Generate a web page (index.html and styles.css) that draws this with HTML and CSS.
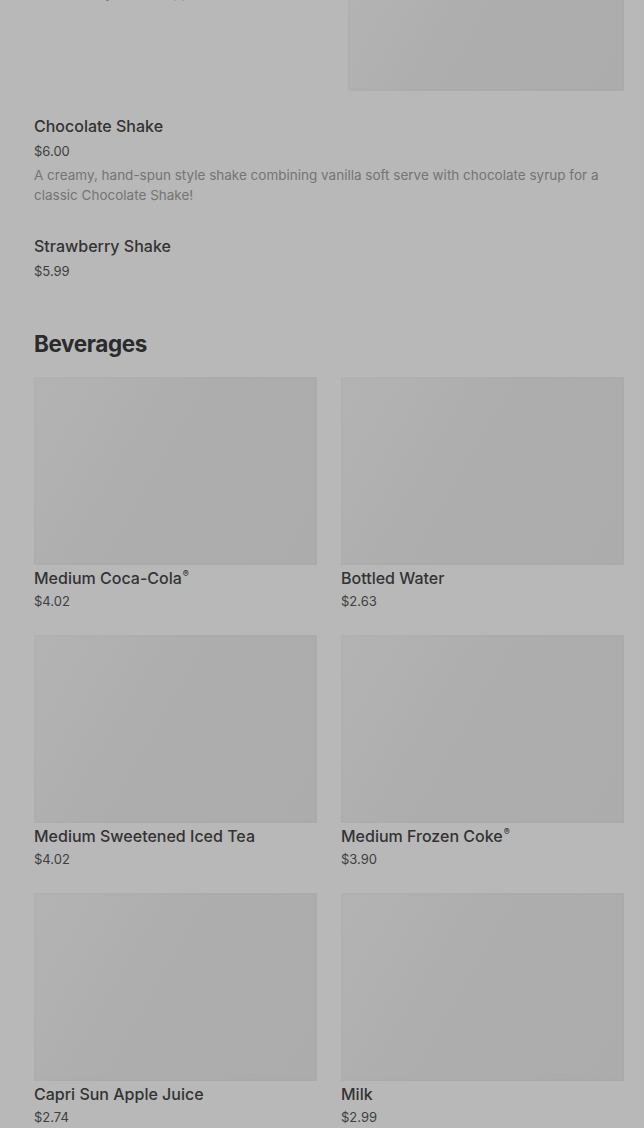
FILE: index.html
```html
<!DOCTYPE html>
<html lang="en">
<head>
<meta charset="utf-8">
<title>Menu</title>
<link rel="stylesheet" href="styles.css">
</head>
<body>
<main class="page">
  <section class="list">
    <article class="item item-with-image">
      <div class="item-text">
        <p class="item-desc">Rich creamy vanilla topped</p>
      </div>
      <div class="item-image placeholder"></div>
    </article>
    <article class="item">
      <div class="item-text">
        <h3 class="item-title">Chocolate Shake</h3>
        <p class="item-price">$6.00</p>
        <p class="item-desc">A creamy, hand-spun style shake combining vanilla soft serve with chocolate syrup for a classic Chocolate Shake!</p>
      </div>
    </article>
    <article class="item">
      <div class="item-text">
        <h3 class="item-title">Strawberry Shake</h3>
        <p class="item-price">$5.99</p>
      </div>
    </article>
  </section>

  <section class="category">
    <h2 class="category-title">Beverages</h2>
    <div class="grid">
      <div class="card"><div class="card-image placeholder"></div><h3 class="card-title">Medium Coca-Cola<sup class="reg">®</sup></h3><p class="card-price">$4.02</p></div>
      <div class="card"><div class="card-image placeholder"></div><h3 class="card-title">Bottled Water</h3><p class="card-price">$2.63</p></div>
      <div class="card"><div class="card-image placeholder"></div><h3 class="card-title">Medium Sweetened Iced Tea</h3><p class="card-price">$4.02</p></div>
      <div class="card"><div class="card-image placeholder"></div><h3 class="card-title">Medium Frozen Coke<sup class="reg">®</sup></h3><p class="card-price">$3.90</p></div>
      <div class="card"><div class="card-image placeholder"></div><h3 class="card-title">Capri Sun Apple Juice</h3><p class="card-price">$2.74</p></div>
      <div class="card"><div class="card-image placeholder"></div><h3 class="card-title">Milk</h3><p class="card-price">$2.99</p></div>
    </div>
  </section>
</main>
</body>
</html>
```

FILE: styles.css
```css
* { box-sizing: border-box; }

html, body {
  margin: 0;
  padding: 0;
  background: #b8b8b8;
}

body {
  font-family: "Inter", "Roboto", "Liberation Sans", sans-serif;
  color: #333333;
  overflow: hidden;
}

.page {
  padding: 0 20px 0 34px;
}

h2, h3, p { margin: 0; }

.list {
  display: flex;
  flex-direction: column;
}

.item {
  display: flex;
  padding: 12px 0 13px;
}

.item-with-image {
  margin-top: -29px;
  gap: 24px;
}

.item-text {
  flex: 1;
  min-width: 0;
}

.item-title {
  font-size: 16px;
  line-height: 20px;
  font-weight: 500;
  color: #333333;
}

.item-price {
  margin-top: 5px;
  font-size: 13px;
  line-height: 20px;
  color: #3f3f3f;
}

.item-desc {
  margin-top: 4px;
  margin-bottom: 6px;
  font-size: 13.5px;
  line-height: 20px;
  color: #747474;
}

.item-with-image .item-desc {
  margin-top: 0;
}

.item-image {
  flex: 0 0 276px;
  height: 108px;
  border-radius: 2px;
}

.placeholder {
  background: linear-gradient(120deg, #b3b3b3 0%, #b1b1b1 20%, #adadad 45%, #acacac 100%);
  box-shadow: inset 0 0 0 2px rgba(0, 0, 0, 0.006);
}

.category {
  margin-top: 34px;
}

.category-title {
  font-size: 22.5px;
  line-height: 32px;
  font-weight: 700;
  letter-spacing: -0.4px;
  color: #2b2b2b;
}

.grid {
  margin-top: 17px;
  display: grid;
  grid-template-columns: 1fr 1fr;
  column-gap: 24px;
  row-gap: 24px;
}

.card-image {
  height: 188px;
}

.card-title {
  margin-top: 3px;
  font-size: 16px;
  line-height: 20px;
  font-weight: 500;
  color: #333333;
}

.reg {
  font-size: 9px;
  vertical-align: top;
  line-height: 12px;
  margin-left: 1px;
}

.card-price {
  margin-top: 3px;
  font-size: 13px;
  line-height: 20px;
  color: #3f3f3f;
}
```
